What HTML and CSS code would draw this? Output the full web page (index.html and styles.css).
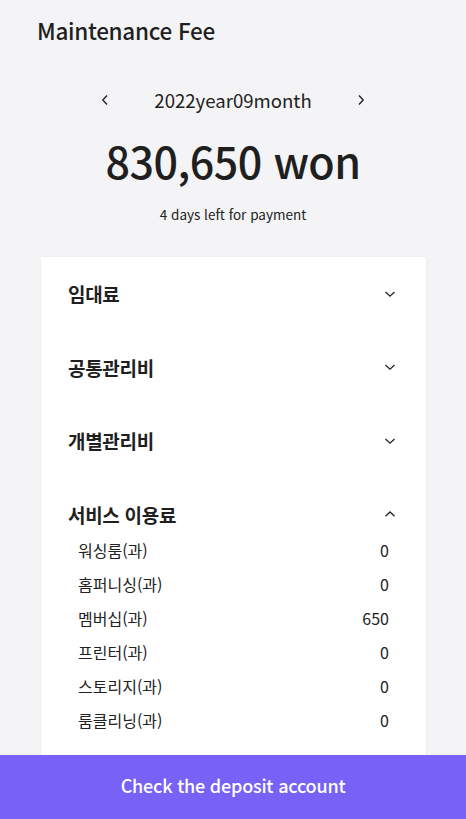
FILE: index.html
```html
<!DOCTYPE html>
<html lang="ko">
<head>
<meta charset="utf-8">
<title>Maintenance Fee</title>
<link rel="stylesheet" href="styles.css">
</head>
<body>
<header class="header"><h1 class="title">Maintenance Fee</h1></header>
<section class="summary">
  <div class="month-nav">
    <span class="arrow"><svg width="8" height="12" viewBox="0 0 8 12"><path d="M6 1.5 1.8 6 6 10.5" fill="none" stroke="#222" stroke-width="1.4"/></svg></span>
    <span class="month">2022year09month</span>
    <span class="arrow"><svg width="8" height="12" viewBox="0 0 8 12"><path d="M2 1.5 6.2 6 2 10.5" fill="none" stroke="#222" stroke-width="1.4"/></svg></span>
  </div>
  <div class="amount">830,650 won</div>
  <div class="due">4 days left for payment</div>
</section>
<main class="card">
  <div class="row"><span class="row-title">임대료</span><svg class="chev" width="12" height="8" viewBox="0 0 12 8"><path d="M1.5 2 6 6.2 10.5 2" fill="none" stroke="#222" stroke-width="1.3"/></svg></div>
  <div class="row"><span class="row-title">공통관리비</span><svg class="chev" width="12" height="8" viewBox="0 0 12 8"><path d="M1.5 2 6 6.2 10.5 2" fill="none" stroke="#222" stroke-width="1.3"/></svg></div>
  <div class="row"><span class="row-title">개별관리비</span><svg class="chev" width="12" height="8" viewBox="0 0 12 8"><path d="M1.5 2 6 6.2 10.5 2" fill="none" stroke="#222" stroke-width="1.3"/></svg></div>
  <div class="row open"><span class="row-title">서비스 이용료</span><svg class="chev" width="12" height="8" viewBox="0 0 12 8"><path d="M1.5 6.2 6 2 10.5 6.2" fill="none" stroke="#222" stroke-width="1.3"/></svg></div>
  <ul class="items">
    <li><span>워싱룸(과)</span><span>0</span></li>
    <li><span>홈퍼니싱(과)</span><span>0</span></li>
    <li><span>멤버십(과)</span><span>650</span></li>
    <li><span>프린터(과)</span><span>0</span></li>
    <li><span>스토리지(과)</span><span>0</span></li>
    <li><span>룸클리닝(과)</span><span>0</span></li>
  </ul>
</main>
<button class="cta">Check the deposit account</button>
</body>
</html>
```
FILE: styles.css
```css
* { box-sizing: border-box; }
html, body { margin: 0; padding: 0; }
body {
  background: #f4f4f6;
  font-family: "Noto Sans CJK KR", "Noto Sans", sans-serif;
  color: #1f1f1f;
  width: 466px;
  height: 819px;
  overflow: hidden;
}
.header { padding: 14px 37px 0; }
.title {
  margin: 0;
  font-size: 22.5px;
  font-weight: 500;
  line-height: 32px;
  letter-spacing: -0.3px;
}
.summary {
  display: flex;
  flex-direction: column;
  align-items: center;
  padding-top: 40px;
}
.month-nav {
  display: flex;
  align-items: center;
  gap: 45px;
  height: 28px;
}
.arrow { display: flex; width: 8px; }
.month { font-size: 18.6px; line-height: 28px; color: #222; }
.amount {
  margin-top: 18px;
  font-size: 43px;
  font-weight: 500;
  line-height: 56px;
  letter-spacing: -0.5px;
}
.due {
  margin-top: 16px;
  font-size: 13.5px;
  line-height: 20px;
  color: #222;
}
.card {
  margin: 33px 40px 0 41px;
  background: #fff;
  box-shadow: 0 0 3px rgba(0,0,0,0.06);
  padding: 0 30px 0 27px;
  height: 600px;
}
.row {
  display: flex;
  align-items: center;
  justify-content: space-between;
  height: 73.5px;
}
.row-title { font-size: 19px; font-weight: 700; letter-spacing: -0.3px; }
.items {
  list-style: none;
  margin: 0;
  padding: 0 7px 0 10px;
  margin-top: -18px;
}
.items li {
  display: flex;
  justify-content: space-between;
  height: 34px;
  align-items: center;
  font-size: 16px;
  color: #222;
}
.cta {
  position: fixed;
  left: 0;
  bottom: 0;
  width: 466px;
  height: 64px;
  padding: 0 0 5px;
  border: 0;
  background: #7861f7;
  color: #fff;
  font-family: "Noto Sans CJK KR", "Noto Sans", sans-serif;
  font-size: 18px;
  font-weight: 500;
  letter-spacing: -0.2px;
}
```
